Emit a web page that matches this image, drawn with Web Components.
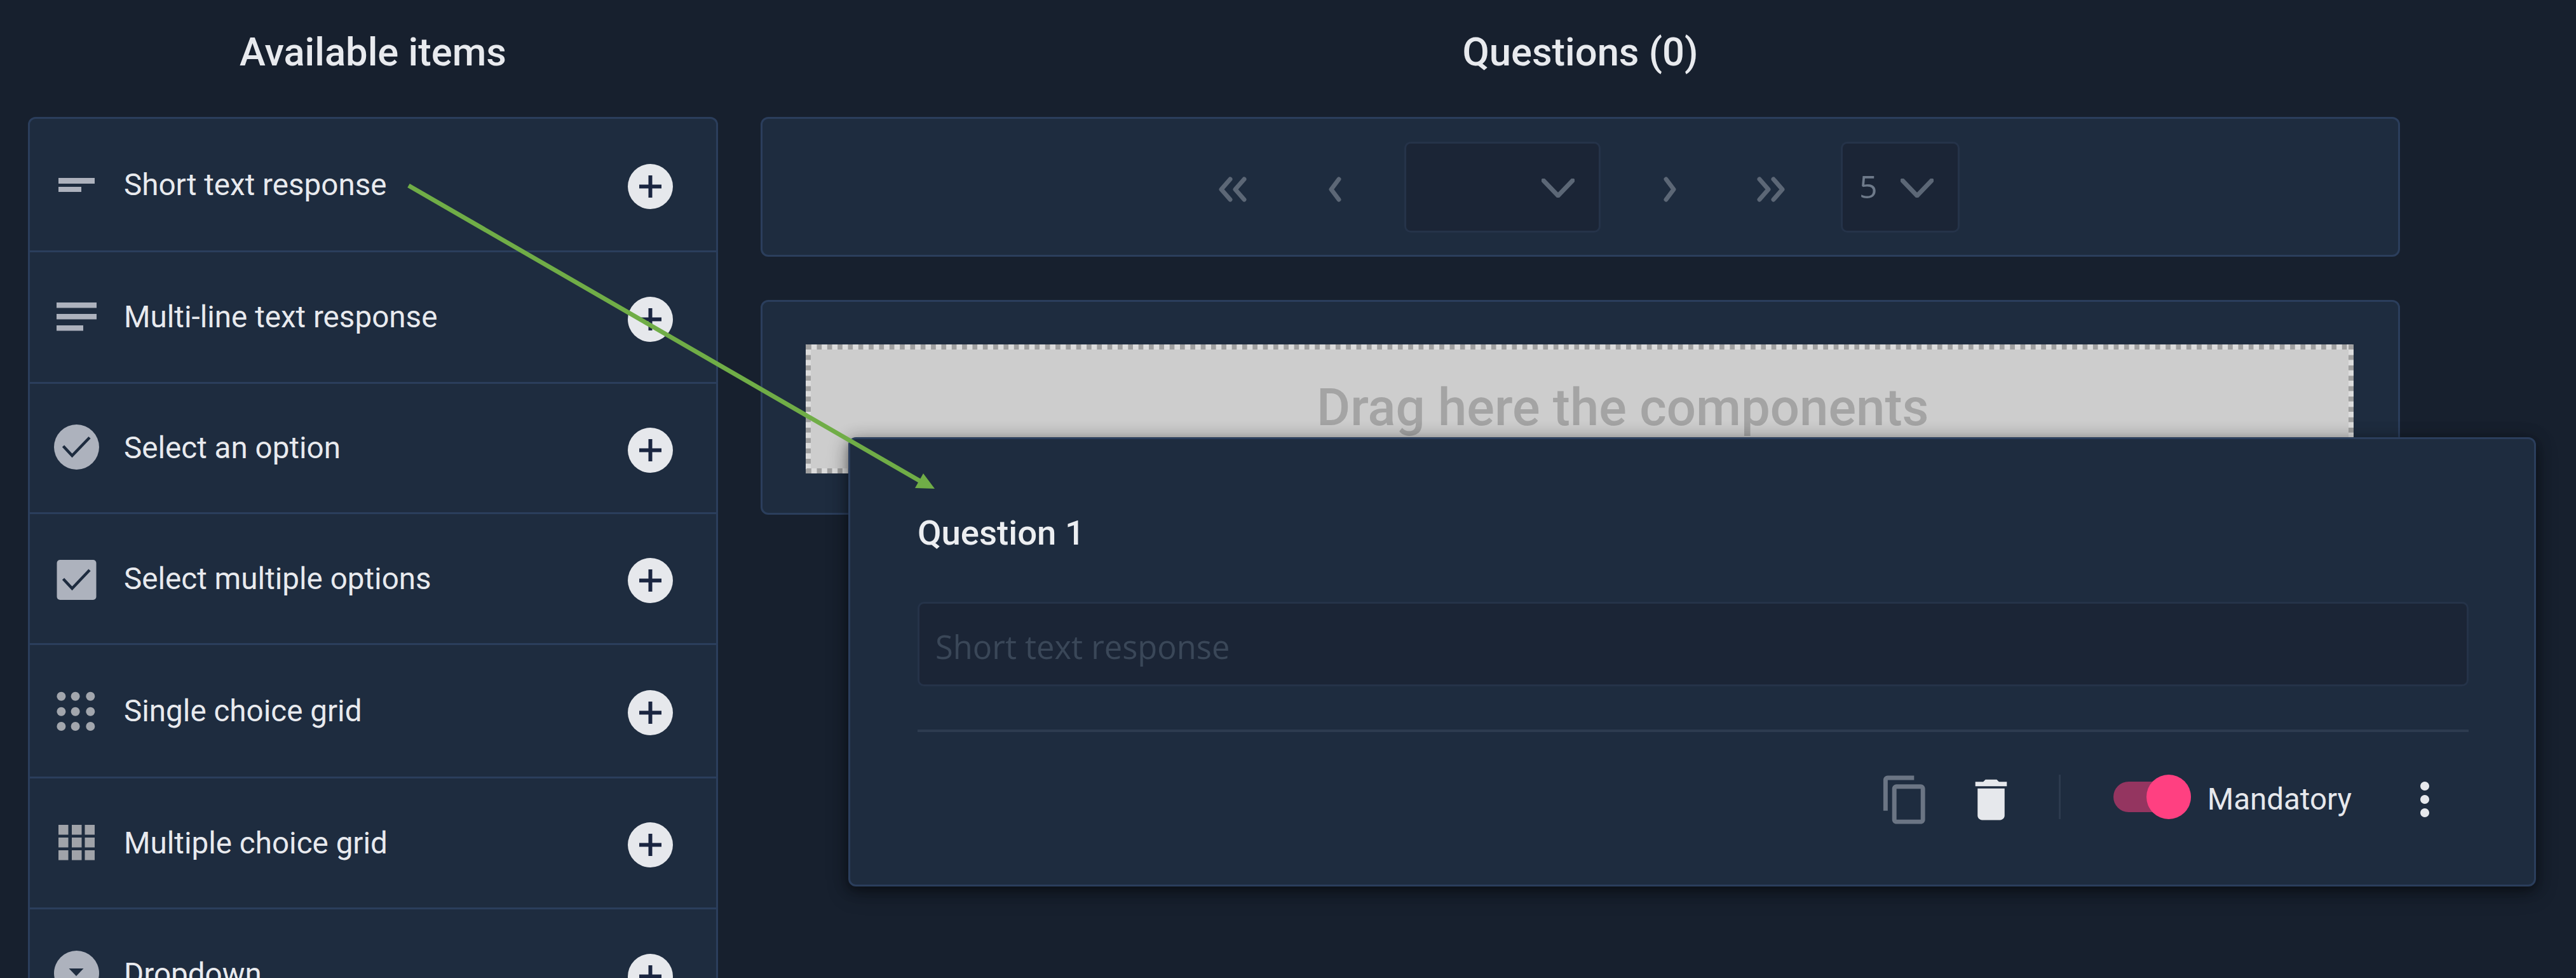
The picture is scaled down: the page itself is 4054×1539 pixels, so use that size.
<!DOCTYPE html>
<html>
<head>
<meta charset="utf-8">
<title>Survey builder</title>
<style>
  html, body { margin: 0; height: 100%; background: #17202e; overflow: hidden; }
  body { font-family: Roboto, "Liberation Sans", sans-serif; color: #e8eaee; }
</style>
</head>
<body>
<survey-builder>
  <items-panel slot="items">
    <item-row icon="short" label="Short text response" style="--row-h:210px"></item-row>
    <item-row icon="notes" label="Multi-line text response" style="--row-h:207px"></item-row>
    <item-row icon="radio" label="Select an option" style="--row-h:205px"></item-row>
    <item-row icon="checkbox" label="Select multiple options" style="--row-h:206px"></item-row>
    <item-row icon="dots" label="Single choice grid" style="--row-h:210px"></item-row>
    <item-row icon="grid" label="Multiple choice grid" style="--row-h:206px"></item-row>
    <item-row icon="dropdown" label="Dropdown" style="--row-h:207px"></item-row>
  </items-panel>
  <page-bar slot="questions"></page-bar>
  <drop-zone slot="questions">Drag here the components</drop-zone>
</survey-builder>
<question-card label="Question 1" placeholder="Short text response"></question-card>
<flow-arrow></flow-arrow>

<script>
const ITEM_ICONS = {
  short: `<g fill="#adb2bd"><rect x="14" y="31" width="57" height="9"/><rect x="14" y="45" width="36" height="8"/></g>`,
  notes: `<g fill="#adb2bd"><rect x="11" y="19" width="63" height="8.5"/><rect x="11" y="37" width="63" height="8.5"/><rect x="11" y="55" width="42" height="8.5"/></g>`,
  radio: `<circle cx="42.5" cy="40.5" r="35.5" fill="#adb2bd"/><path d="M21.5 39 35.5 54 63 25.5" fill="none" stroke="#1e2c3f" stroke-width="4.5"/>`,
  checkbox: `<rect x="11.5" y="12" width="62" height="63" rx="5" fill="#adb2bd"/><path d="M21.5 42 35.5 57 63 28" fill="none" stroke="#1e2c3f" stroke-width="4.5"/>`,
  dots: `<g fill="#a2a6ad">${[18.4, 40.6, 64.3].map(x => [18.8, 42.7, 66].map(y => `<circle cx="${x}" cy="${y}" r="7"/>`).join('')).join('')}</g>`,
  grid: `<g fill="#a0a3a9">${[14, 35, 55.5].map(x => [13, 33, 53].map(y => `<rect x="${x}" y="${y}" width="15.5" height="15.5"/>`).join('')).join('')}</g>`,
  dropdown: `<circle cx="42.5" cy="40.5" r="35.5" fill="#adb2bd"/><path d="M30.5 33h23L42 45z" fill="#1e2c3f"/>`
};

class SurveyBuilder extends HTMLElement {
  constructor() {
    super();
    this.attachShadow({ mode: 'open' }).innerHTML = `
      <style>
        :host { display: grid; grid-template-columns: 1086px 2580px; column-gap: 67px; padding-left: 44px; }
        h2 { margin: 0 0 20px; height: 164px; display: flex; align-items: center; justify-content: center;
             font: 500 61.5px Roboto, sans-serif; color: #e8eaee; }
        .questions { display: flex; flex-direction: column; gap: 68px; }
      </style>
      <section><h2>Available items</h2><slot name="items"></slot></section>
      <section><h2>Questions (0)</h2><div class="questions"><slot name="questions"></slot></div></section>`;
  }
}

class ItemsPanel extends HTMLElement {
  constructor() {
    super();
    this.attachShadow({ mode: 'open' }).innerHTML = `
      <style>
        :host { display: block; background: #1e2c3f; border: 3px solid #2b3e5c; border-radius: 12px; }
      </style>
      <slot></slot>`;
  }
}

class ItemRow extends HTMLElement {
  constructor() {
    super();
    this.attachShadow({ mode: 'open' }).innerHTML = `
      <style>
        :host { display: flex; align-items: center; box-sizing: border-box; height: var(--row-h, 207px);
                border-bottom: 3px solid #2b3e5c; padding: 0 68px 0 31px; }
        svg.icon { width: 85px; height: 84px; flex: none; }
        span { flex: 1; margin-left: 32px; font: 400 47.6px Roboto, sans-serif; color: #e8eaee; white-space: nowrap; }
        .add { width: 71px; height: 71px; margin-top: 6px; border-radius: 50%; background: #e6e8ec; flex: none; display: block; }
      </style>
      <svg class="icon" viewBox="0 0 85 84">${ITEM_ICONS[this.getAttribute('icon')]}</svg>
      <span>${this.getAttribute('label')}</span>
      <svg class="add" viewBox="0 0 71 71"><path d="M18 35.5h35M35.5 18v35" stroke="#1a2540" stroke-width="6"/></svg>`;
  }
}

class PageBar extends HTMLElement {
  constructor() {
    super();
    const chevron = d => `<svg class="nav" viewBox="0 0 102 40"><path d="${d}" fill="none" stroke="#5c6776" stroke-width="7" stroke-linecap="round" stroke-linejoin="round"/></svg>`;
    const caret = `<svg class="caret" viewBox="0 0 52 30"><path d="M3 3 26 27 49 3" fill="none" stroke="#5c6776" stroke-width="7" stroke-linecap="round" stroke-linejoin="round"/></svg>`;
    this.attachShadow({ mode: 'open' }).innerHTML = `
      <style>
        :host { display: flex; justify-content: center; align-items: center; gap: 58px; box-sizing: border-box;
                height: 220px; background: #1e2c3f; border: 3px solid #2b3e5c; border-radius: 12px; }
        .nav { width: 102px; height: 40px; flex: none; margin-top: 7px; }
        .select { box-sizing: border-box; height: 143px; display: flex; align-items: center; justify-content: flex-end;
                  background: #1b2536; border: 3px solid #253349; border-radius: 10px; padding: 4px 38px 0 26px; flex: none; }
        .first { width: 309px; }
        .size { width: 187px; justify-content: space-between; padding-right: 38px; }
        .size span { font: 400 50px "Open Sans", sans-serif; color: #6e7a8a; margin-top: -6px; }
        .caret { width: 52px; height: 30px; }
      </style>
      ${chevron('M46 4l-14 16 14 16m22-32-14 16 14 16')}
      ${chevron('M57 4 45 20 57 36')}
      <div class="select first">${caret}</div>
      ${chevron('M45 4 57 20 45 36')}
      ${chevron('M32 4l14 16-14 16m22-32 14 16-14 16')}
      <div class="select size"><span>5</span>${caret}</div>`;
  }
}

class DropZone extends HTMLElement {
  constructor() {
    super();
    this.attachShadow({ mode: 'open' }).innerHTML = `
      <style>
        :host { display: block; box-sizing: border-box; height: 338px; padding: 67px 70px 61px 67.5px;
                background: #1e2c3f; border: 3px solid #2b3e5c; border-radius: 12px; }
        .zone { box-sizing: border-box; height: 203px; padding: 0 0 5px 136px; display: flex; align-items: center; justify-content: center;
                font: 500 81.5px Roboto, sans-serif; color: #a4a4a4; background-color: #cdcdcd;
                background-image:
                  linear-gradient(90deg, #a0a0a0 8px, transparent 8px),
                  linear-gradient(90deg, #a0a0a0 8px, transparent 8px),
                  linear-gradient(#a0a0a0 8px, transparent 8px),
                  linear-gradient(#a0a0a0 8px, transparent 8px),
                  linear-gradient(#dcdcdc, #dcdcdc),
                  linear-gradient(#dcdcdc, #dcdcdc),
                  linear-gradient(#dcdcdc, #dcdcdc),
                  linear-gradient(#dcdcdc, #dcdcdc);
                background-size:
                  16.33px 8px, 16.33px 8px, 8px 16.33px, 8px 16.33px,
                  100% 8px, 100% 8px, 8px 100%, 8px 100%;
                background-position:
                  17.5px 0, 17.5px 100%, 0 16.7px, 100% 16.7px,
                  0 0, 0 100%, 0 0, 100% 0;
                background-repeat:
                  repeat-x, repeat-x, repeat-y, repeat-y,
                  no-repeat, no-repeat, no-repeat, no-repeat; }
      </style>
      <div class="zone"><slot></slot></div>`;
  }
}

class QuestionCard extends HTMLElement {
  constructor() {
    super();
    this.attachShadow({ mode: 'open' }).innerHTML = `
      <style>
        /* dragged preview, floats over the question list */
        :host { position: absolute; left: 1335px; top: 688px; width: 2656px; box-sizing: border-box;
                padding: 117px 103px 92px 106px; background: #1e2c3f; border: 3px solid #2b3e5c; border-radius: 12px;
                box-shadow: 0 6px 12px rgba(0,0,0,.22), 0 10px 34px rgba(0,0,0,.3), 0 2px 26px rgba(0,0,0,.22); }
        .title { font: 500 54.5px/60px Roboto, sans-serif; color: #eceef1; }
        .input { box-sizing: border-box; height: 133px; margin-top: 79px; padding: 8px 25px 0; display: flex; align-items: center;
                 background: #1b2536; border: 3px solid #253349; border-radius: 10px;
                 font: 400 50.6px "Open Sans", sans-serif; color: #3a4758; }
        hr { height: 4px; margin: 68px 0 0; border: 0; background: #2d3b4f; }
        .actions { display: flex; align-items: center; height: 84px; margin-top: 64px; padding-right: 27px; justify-content: flex-end; }
        .copy { width: 83px; height: 83px; fill: #6b7584; }
        .delete { width: 85px; height: 85px; fill: #e6e8ec; margin-left: 51px; }
        .sep { width: 3px; height: 70px; margin: -8px 83px 0 64px; background: #2c3a4e; }
        .toggle { position: relative; width: 122px; height: 48px; margin-top: -8px; border-radius: 24px; background: #943560; flex: none; }
        .thumb { position: absolute; right: 0; top: -11px; width: 70px; height: 70px; border-radius: 50%; background: #ff4081; }
        .label { margin-left: 26px; font: 400 47.5px Roboto, sans-serif; color: #e6e8ec; }
        .more { width: 84px; height: 84px; margin-left: 73px; fill: #e6e8ec; }
      </style>
      <div class="title">${this.getAttribute('label')}</div>
      <div class="input">${this.getAttribute('placeholder')}</div>
      <hr>
      <div class="actions">
        <svg class="copy" viewBox="0 0 24 24"><path d="M16 1H4c-1.1 0-2 .9-2 2v14h2V3h12V1zm3 4H8c-1.1 0-2 .9-2 2v14c0 1.1.9 2 2 2h11c1.1 0 2-.9 2-2V7c0-1.1-.9-2-2-2zm0 16H8V7h11v14z"/></svg>
        <svg class="delete" viewBox="0 0 24 24"><path d="M6 19c0 1.1.9 2 2 2h8c1.1 0 2-.9 2-2V7H6v12zM19 4h-3.5l-1-1h-5l-1 1H5v2h14V4z"/></svg>
        <div class="sep"></div>
        <div class="toggle"><div class="thumb"></div></div>
        <span class="label">Mandatory</span>
        <svg class="more" viewBox="0 0 24 24"><path d="M12 8c1.1 0 2-.9 2-2s-.9-2-2-2-2 .9-2 2 .9 2 2 2zm0 2c-1.1 0-2 .9-2 2s.9 2 2 2 2-.9 2-2-.9-2-2-2zm0 6c-1.1 0-2 .9-2 2s.9 2 2 2 2-.9 2-2-.9-2-2-2z"/></svg>
      </div>`;
  }
}

class FlowArrow extends HTMLElement {
  constructor() {
    super();
    this.attachShadow({ mode: 'open' }).innerHTML = `
      <style>
        :host { position: absolute; left: 0; top: 0; width: 4054px; height: 1539px; pointer-events: none; }
        svg { display: block; width: 100%; height: 100%; }
      </style>
      <svg viewBox="0 0 4054 1539">
        <line x1="643" y1="292" x2="1448" y2="757" stroke="#70ad47" stroke-width="7"/>
        <path d="M1471 769 1440 768 1453 745z" fill="#70ad47"/>
      </svg>`;
  }
}

customElements.define('survey-builder', SurveyBuilder);
customElements.define('items-panel', ItemsPanel);
customElements.define('item-row', ItemRow);
customElements.define('page-bar', PageBar);
customElements.define('drop-zone', DropZone);
customElements.define('question-card', QuestionCard);
customElements.define('flow-arrow', FlowArrow);
</script>
</body>
</html>
